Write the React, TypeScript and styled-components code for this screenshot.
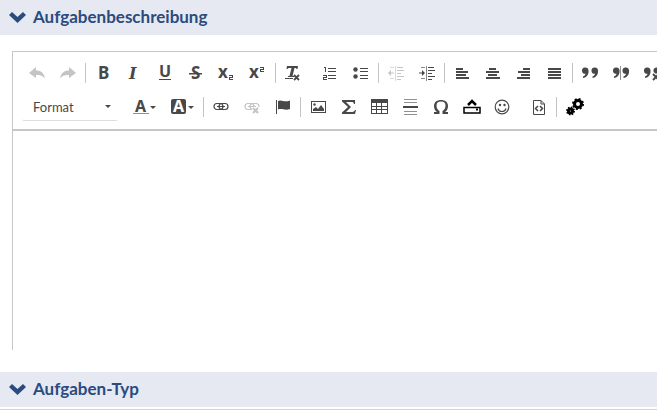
import React from "react";
import styled, { createGlobalStyle } from "styled-components";

const GlobalStyle = createGlobalStyle`
  * { box-sizing: border-box; }
  body { margin: 0; background: #fff; font-family: Lato, sans-serif; overflow: hidden; }
`;

const SectionHeader = styled.h2`
  margin: 0;
  background: #e6e9f1;
`;

const SectionToggle = styled.button`
  display: flex;
  align-items: center;
  gap: 6px;
  width: 100%;
  height: 35px;
  padding: 0 8px 2px;
  border: 0;
  background: none;
  color: #2a4b7f;
  font: 700 17px/24px Lato, sans-serif;
  text-align: left;
`;

const Editor = styled.section`
  margin: 16px 0 22px 12px;
  border: solid #c6c6c6;
  border-width: 1px 0 0 1px;
  overflow: hidden;
`;

const Toolbar = styled.div`
  padding: 4px 0 5px 9px;
  border-bottom: 2px solid #c6c6c6;
`;

const ToolRow = styled.div`
  display: flex;
  align-items: center;
  height: 34px;
`;

const ToolButton = styled.button<{ $gap?: number; $wide?: boolean }>`
  flex: none;
  display: flex;
  align-items: center;
  justify-content: center;
  width: ${(p) => (p.$wide ? 37 : 30)}px;
  height: 30px;
  margin: 0 1px 0 ${(p) => p.$gap ?? 0}px;
  padding: 0;
  border: 0;
  background: none;
  color: #484848;
  &:disabled { color: #c4c4c4; }
`;

const Separator = styled.span`
  flex: none;
  width: 1px;
  height: 20px;
  margin: 0 2px 0 1px;
  background: #c4c4c4;
`;

const FormatButton = styled.button`
  flex: none;
  display: flex;
  align-items: center;
  justify-content: space-between;
  width: 96px;
  height: 28px;
  margin-right: 8px;
  padding: 0 7px 0 11px;
  border: 0;
  border-bottom: 1px solid #dedede;
  border-radius: 2px;
  background: none;
  color: #484848;
  font: 400 13px/20px Lato, sans-serif;
`;

const EditArea = styled.div`
  min-height: 219px;
  outline: none;
`;

const NextPanel = styled.div`
  margin-top: 2px;
  height: 1px;
  background: #d4d4d4;
`;

const Glyph = styled.svg`
  display: block;
  overflow: visible;
`;

function Icon({ children, w = 16 }: { children: React.ReactNode; w?: number }) {
  return (
    <Glyph width={w} height={16} viewBox={`0 0 ${w} 16`} fill="currentColor" aria-hidden="true">
      {children}
    </Glyph>
  );
}

const sans = { fontFamily: "Noto Sans, sans-serif", fontWeight: 700 };
const serif = { fontFamily: "DejaVu Serif, serif", fontWeight: 700, fontStyle: "italic" };

const undo = <path d="M0 8 7 2v3.500c5 0 8 2.500 9 8-2.500-3-5-3.500-9-3.500V13z" />;
const quotes = (
  <>
    <path d="M0 6a3.200 3.200 0 0 1 6.500-.5c.5 4-2 7-5.500 7.500v-1.500c1.500-.5 2.500-1.500 2.500-2.700C1.500 8.800 0 8 0 6z" />
    <path d="M9.500 6a3.200 3.200 0 0 1 6.500-.5c.5 4-2 7-5.500 7.500v-1.500c1.500-.5 2.500-1.500 2.500-2.700C11 8.800 9.500 8 9.500 6z" />
  </>
);
const indentLines = (
  <>
    <path d="M2 2h4v1H2zM2 13h4v1H2zM7 1h1v15H7z" opacity=".65" />
    <path d="M9 2h6v1H9zM9 5h7v1H9zM9 8h4v1H9zM9 11h7v1H9zM9 14h4v1H9z" />
  </>
);
const chain = (
  <>
    <rect x="1" y="4.500" width="9" height="6" rx="3" fill="none" stroke="currentColor" strokeWidth="1.200" />
    <rect x="6" y="4.500" width="9" height="6" rx="3" fill="none" stroke="currentColor" strokeWidth="1.200" />
    <path d="M4 7h8v1H4z" />
  </>
);
const cog = (x: number, y: number, r: number) => (
  <g transform={`translate(${x} ${y})`} fill="none" stroke="#000">
    <circle r={r} strokeWidth="3" />
    <circle r={r + 1.5} strokeWidth="2" strokeDasharray={`${((r + 1.5) * Math.PI) / 8} ${((r + 1.5) * Math.PI) / 8}`} />
  </g>
);

type Tool = { label: string; icon: React.ReactNode; off?: boolean; gap?: number; wide?: boolean; w?: number };
type Item = Tool | "|";

const firstRow: Item[] = [
  { label: "Rückgängig", off: true, icon: undo },
  { label: "Wiederherstellen", off: true, icon: <g transform="matrix(-1 0 0 1 16 0)">{undo}</g> },
  "|",
  { label: "Fett", icon: <text x="3" y="14" fontSize="17" {...sans}>B</text> },
  { label: "Kursiv", icon: <text x="3" y="14" fontSize="16" {...serif}>I</text> },
  { label: "Unterstrichen", icon: <><text x="2" y="12" fontSize="16" {...sans}>U</text><path d="M2 14h12v1H2z" /></> },
  { label: "Durchgestrichen", icon: <><text x="3" y="14" fontSize="17" {...sans}>S</text><path d="M1 8h13v1.500H1z" /></> },
  { label: "Tiefgestellt", icon: <><text x="-1" y="13" fontSize="17" {...sans}>x</text><path d="M10 10h4v3h-3v1h3v1h-4v-3h3v-1h-3z" /></> },
  { label: "Hochgestellt", icon: <><text x="-1" y="13" fontSize="17" {...sans}>x</text><path d="M10 2h4v3h-3v1h3v1h-4V4h3V3h-3z" /></> },
  "|",
  { label: "Formatierung entfernen", icon: <><path d="M2 1h11l-.5 3h-1L11 3H9.500L7.500 11H9v1H3v-1h1.500L6.500 3h-3l-1 1h-1zM0 13h8v1H0z" /><path d="m9 10 5 5m0-5-5 5" stroke="currentColor" strokeWidth="1.800" /></> },
  { label: "Nummerierte Liste", gap: 6, icon: <path d="M2 2h2v5H3V3H2zM1 10h4v3H2v1h3v1H1v-3h3v-1H1zM6 3h8v1H6zM6 6h8v1H6zM6 10h8v1H6zM6 13h8v1H6z" /> },
  { label: "Liste", icon: <><circle cx="2.500" cy="4.500" r="2.200" /><circle cx="2.500" cy="11.500" r="2.200" /><path d="M7 3h8v1H7zM7 6h8v1H7zM7 10h8v1H7zM7 13h8v1H7z" /></> },
  "|",
  { label: "Einzug verkleinern", off: true, icon: <>{indentLines}<path d="M0 8l3-3v2.500h3v1H3V11z" /></> },
  { label: "Einzug vergrößern", icon: <>{indentLines}<path d="M6 8 3 5v2.500H0v1h3V11z" /></> },
  "|",
  { label: "Linksbündig", icon: <path d="M2 3h7v2H2zM2 6h12v2H2zM2 9h10v2H2zM2 12h13v2H2z" /> },
  { label: "Zentriert", icon: <path d="M4 3h7v2H4zM1 6h13v2H1zM3 9h9v2H3zM1 12h14v2H1z" /> },
  { label: "Rechtsbündig", icon: <path d="M7 3h7v2H7zM2 6h12v2H2zM5 9h9v2H5zM1 12h13v2H1z" /> },
  { label: "Blocksatz", icon: <path d="M1 3h13v2H1zM1 6h13v2H1zM1 9h13v2H1zM1 12h13v2H1z" /> },
  "|",
  { label: "Zitatblock", icon: quotes },
  { label: "Zitat teilen", icon: <>{quotes}<path d="M7 0h2v16H7z" fill="#fff" /><path d="M7 1h1v14H7z" opacity=".6" /></> },
  { label: "Zitat entfernen", icon: <>{quotes}<path d="m9 9 6 6m0-6-6 6" stroke="#fff" strokeWidth="4" /><path d="m9 9 6 6m0-6-6 6" stroke="currentColor" strokeWidth="2" /></> },
];

const caret = <path d="M17 7h6l-3 3z" />;

const secondRow: Item[] = [
  { label: "Textfarbe", wide: true, w: 24, icon: <><text x="2" y="13" fontSize="16" {...sans}>A</text><path d="M0 14h16v1H0z" opacity=".6" />{caret}</> },
  { label: "Hintergrundfarbe", wide: true, w: 24, icon: <><rect x="0" y="0" width="15" height="15" rx="2" /><text x="2" y="13" fontSize="16" fill="#fff" {...sans}>A</text>{caret}</> },
  "|",
  { label: "Link einfügen", icon: chain },
  { label: "Link entfernen", off: true, icon: <>{chain}<path d="M8 8h8v8H8z" fill="#fff" /><path d="m9 9 5 5m0-5-5 5" stroke="currentColor" strokeWidth="2" /></> },
  { label: "Anker", icon: <path d="M1 1h1v14H1zM3 2c4-2 6 2 12-.5V10c-5 2-8-1-12 .5z" /> },
  "|",
  { label: "Bild", icon: <><path d="M1 2h15v12H1zM2 3v10h13V3z" fillRule="evenodd" /><path d="M3 12v-2l3-2 2 2 3-4 3 4v2z" /><circle cx="4.500" cy="5.500" r="1.200" /></> },
  { label: "Formel", icon: <path d="M1 1h13v4h-1c-.3-1.500-1-2-2.500-2H5l5 5-5 5h6c1.500 0 2.500-.7 3-2h1l-1 4H1v-1.500L7 8 1 2.500z" /> },
  { label: "Tabelle", icon: <path d="M-1 0h17v15H-1zM0 4v3h4V4zM5 4v3h4V4zM10 4v3h5V4zM0 8v2h4V8zM5 8v2h4V8zM10 8v2h5V8zM0 11v3h4v-3zM5 11v3h4v-3zM10 11v3h5v-3z" fillRule="evenodd" /> },
  { label: "Horizontale Linie", icon: <><path d="M1 0h13v1H1zM1 3h13v1H1zM1 12h13v1H1zM1 15h13v1H1z" opacity=".6" /><path d="M0 7h15v2H0z" /></> },
  { label: "Sonderzeichen", icon: <path d="M0 13v2h5.500v-3C3.500 11 2.500 9 2.500 6.500 2.500 4 4 2.500 7 2.500S11.500 4 11.500 6.500c0 2.500-1 4.500-3 5.500v3H14v-2h-3c2-1.200 3-3.500 3-6 0-4-3-6-7-6S0 3 0 7c0 2.500 1 4.800 3 6z" /> },
  { label: "Datei hochladen", icon: <g stroke="#000" fill="none"><path d="M-1 8.500h16V14H-1z" strokeWidth="1.500" /><path d="m3 6 4-4 4 4" strokeWidth="2.500" /><path d="M11 10.500h2" strokeWidth="2" /></g> },
  { label: "Smiley", icon: <><circle cx="6" cy="8" r="6.800" fill="none" stroke="currentColor" strokeWidth="1.200" /><circle cx="4" cy="6" r="1.200" /><circle cx="8.500" cy="6" r="1.200" /><path d="M2 9.500c1 4 7 4 8 0" fill="none" stroke="currentColor" strokeWidth="1.200" /></> },
  { label: "Quellcode", gap: 4, icon: <g fill="none" stroke="currentColor"><path d="M2.500 1.500H10L13.500 5v10.500h-11zM10 1.500V5h3.500" /><path d="m7 7-2.500 2.500L7 12m2-5 2.500 2.500L9 12" strokeWidth="1.500" /></g> },
  "|",
  { label: "Plugins", icon: <>{cog(12, 5, 3.5)}{cog(4.5, 12, 2)}</> },
];

function Tools({ items }: { items: Item[] }) {
  return (
    <>
      {items.map((t, i) =>
        t === "|" ? (
          <Separator key={i} />
        ) : (
          <ToolButton key={i} type="button" aria-label={t.label} disabled={t.off} $gap={t.gap} $wide={t.wide}>
            <Icon w={t.w}>{t.icon}</Icon>
          </ToolButton>
        ),
      )}
    </>
  );
}

function Section({ title }: { title: string }) {
  return (
    <SectionHeader>
      <SectionToggle type="button" aria-expanded="true">
        <Glyph width="19" height="16" viewBox="0 0 19 16" fill="currentColor" aria-hidden="true">
          <path d="m1 6 3-3 5.500 5L15 3l3 3-8.500 8z" />
        </Glyph>
        {title}
      </SectionToggle>
    </SectionHeader>
  );
}

export default function App() {
  return (
    <main>
      <GlobalStyle />
      <Section title="Aufgabenbeschreibung" />
      <Editor>
        <Toolbar role="toolbar" aria-label="Editor">
          <ToolRow><Tools items={firstRow} /></ToolRow>
          <ToolRow>
            <FormatButton type="button" aria-haspopup="listbox">
              Format
              <Glyph width="6" height="3" viewBox="0 0 6 3" fill="currentColor" aria-hidden="true"><path d="M0 0h6L3 3z" /></Glyph>
            </FormatButton>
            <Tools items={secondRow} />
          </ToolRow>
        </Toolbar>
        <EditArea contentEditable suppressContentEditableWarning role="textbox" aria-multiline="true" aria-label="Aufgabenbeschreibung" />
      </Editor>
      <Section title="Aufgaben-Typ" />
      <NextPanel />
    </main>
  );
}
